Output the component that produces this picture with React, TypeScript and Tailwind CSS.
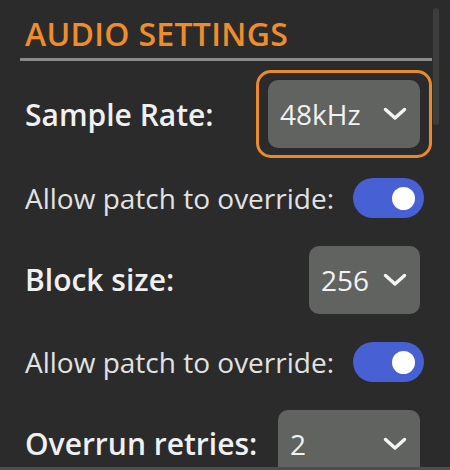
import React from "react";

/* ===== SMALL PARTS ===== */
function Chevron() {
  return (
    <svg width="24" height="14" viewBox="0 0 24 14" fill="none">
      <polyline
        points="2.5,2.5 12,11 21.5,2.5"
        stroke="#f5f5f5"
        strokeWidth="3.4"
        strokeLinecap="round"
        strokeLinejoin="round"
      />
    </svg>
  );
}

function Select({ value, width }: { value: string; width: string }) {
  return (
    <div
      className={`${width} h-[68px] shrink-0 rounded-[10px] bg-[#616360] flex items-center justify-between pl-3 pr-[13px] text-[28px] font-medium text-[#f2f2f2]`}
    >
      <span>{value}</span>
      <Chevron />
    </div>
  );
}

function Toggle() {
  return (
    <div className="relative w-[71px] h-[40px] rounded-full bg-[#4761d4] shrink-0">
      <span className="absolute right-[9px] top-[8.5px] w-[23px] h-[23px] rounded-full bg-white" />
    </div>
  );
}

export default function App() {
  return (
    <div
      className="relative w-[450px] h-[470px] overflow-hidden bg-[#2b2b2b] border-b-[3px] border-[#4d4d4d]"
      style={{ fontFamily: "'Open Sans', Lato, sans-serif" }}
    >
      {/* scrollbar thumb */}
      <div className="absolute left-[433px] top-[8px] w-[6px] h-[117px] rounded-full bg-[#3c3e3c]" />

      <div className="ml-5 w-[412px]">
        {/* ===== HEADER ===== */}
        <h2 className="pl-[5px] pt-[16px] h-[58px] text-[32px] leading-[36px] font-semibold text-[#ef8d2b] tracking-[0.3px]">
          AUDIO SETTINGS
        </h2>
        <div className="h-[3px] bg-[#8a8a8a]" />

        {/* ===== SAMPLE RATE ===== */}
        <div className="mt-[9px] flex items-center justify-between pl-[5px]">
          <span className="text-[30px] font-semibold text-[#f0f0f0]">Sample Rate:</span>
          <div className="rounded-[15px] border-[3px] border-[#e98b2b] px-[9px] py-[7px]">
            <Select value="48kHz" width="w-[152px]" />
          </div>
        </div>

        <div className="mt-[20px] h-[40px] flex items-center justify-between pl-[5px] pr-[8px]">
          <span className="text-[28px] text-[#e2e2e2]">Allow patch to override:</span>
          <Toggle />
        </div>

        {/* ===== BLOCK SIZE ===== */}
        <div className="mt-[28px] h-[67px] flex items-center justify-between pl-[5px] pr-[12px]">
          <span className="text-[30px] font-semibold text-[#f0f0f0]">Block size:</span>
          <Select value="256" width="w-[111px]" />
        </div>

        <div className="mt-[29px] h-[40px] flex items-center justify-between pl-[5px] pr-[8px]">
          <span className="text-[28px] text-[#e2e2e2]">Allow patch to override:</span>
          <Toggle />
        </div>

        {/* ===== OVERRUN ===== */}
        <div className="mt-[28px] h-[67px] flex items-center justify-between pl-[5px] pr-[12px]">
          <span className="text-[30px] font-semibold text-[#f0f0f0]">Overrun retries:</span>
          <Select value="2" width="w-[142px]" />
        </div>
      </div>
    </div>
  );
}
